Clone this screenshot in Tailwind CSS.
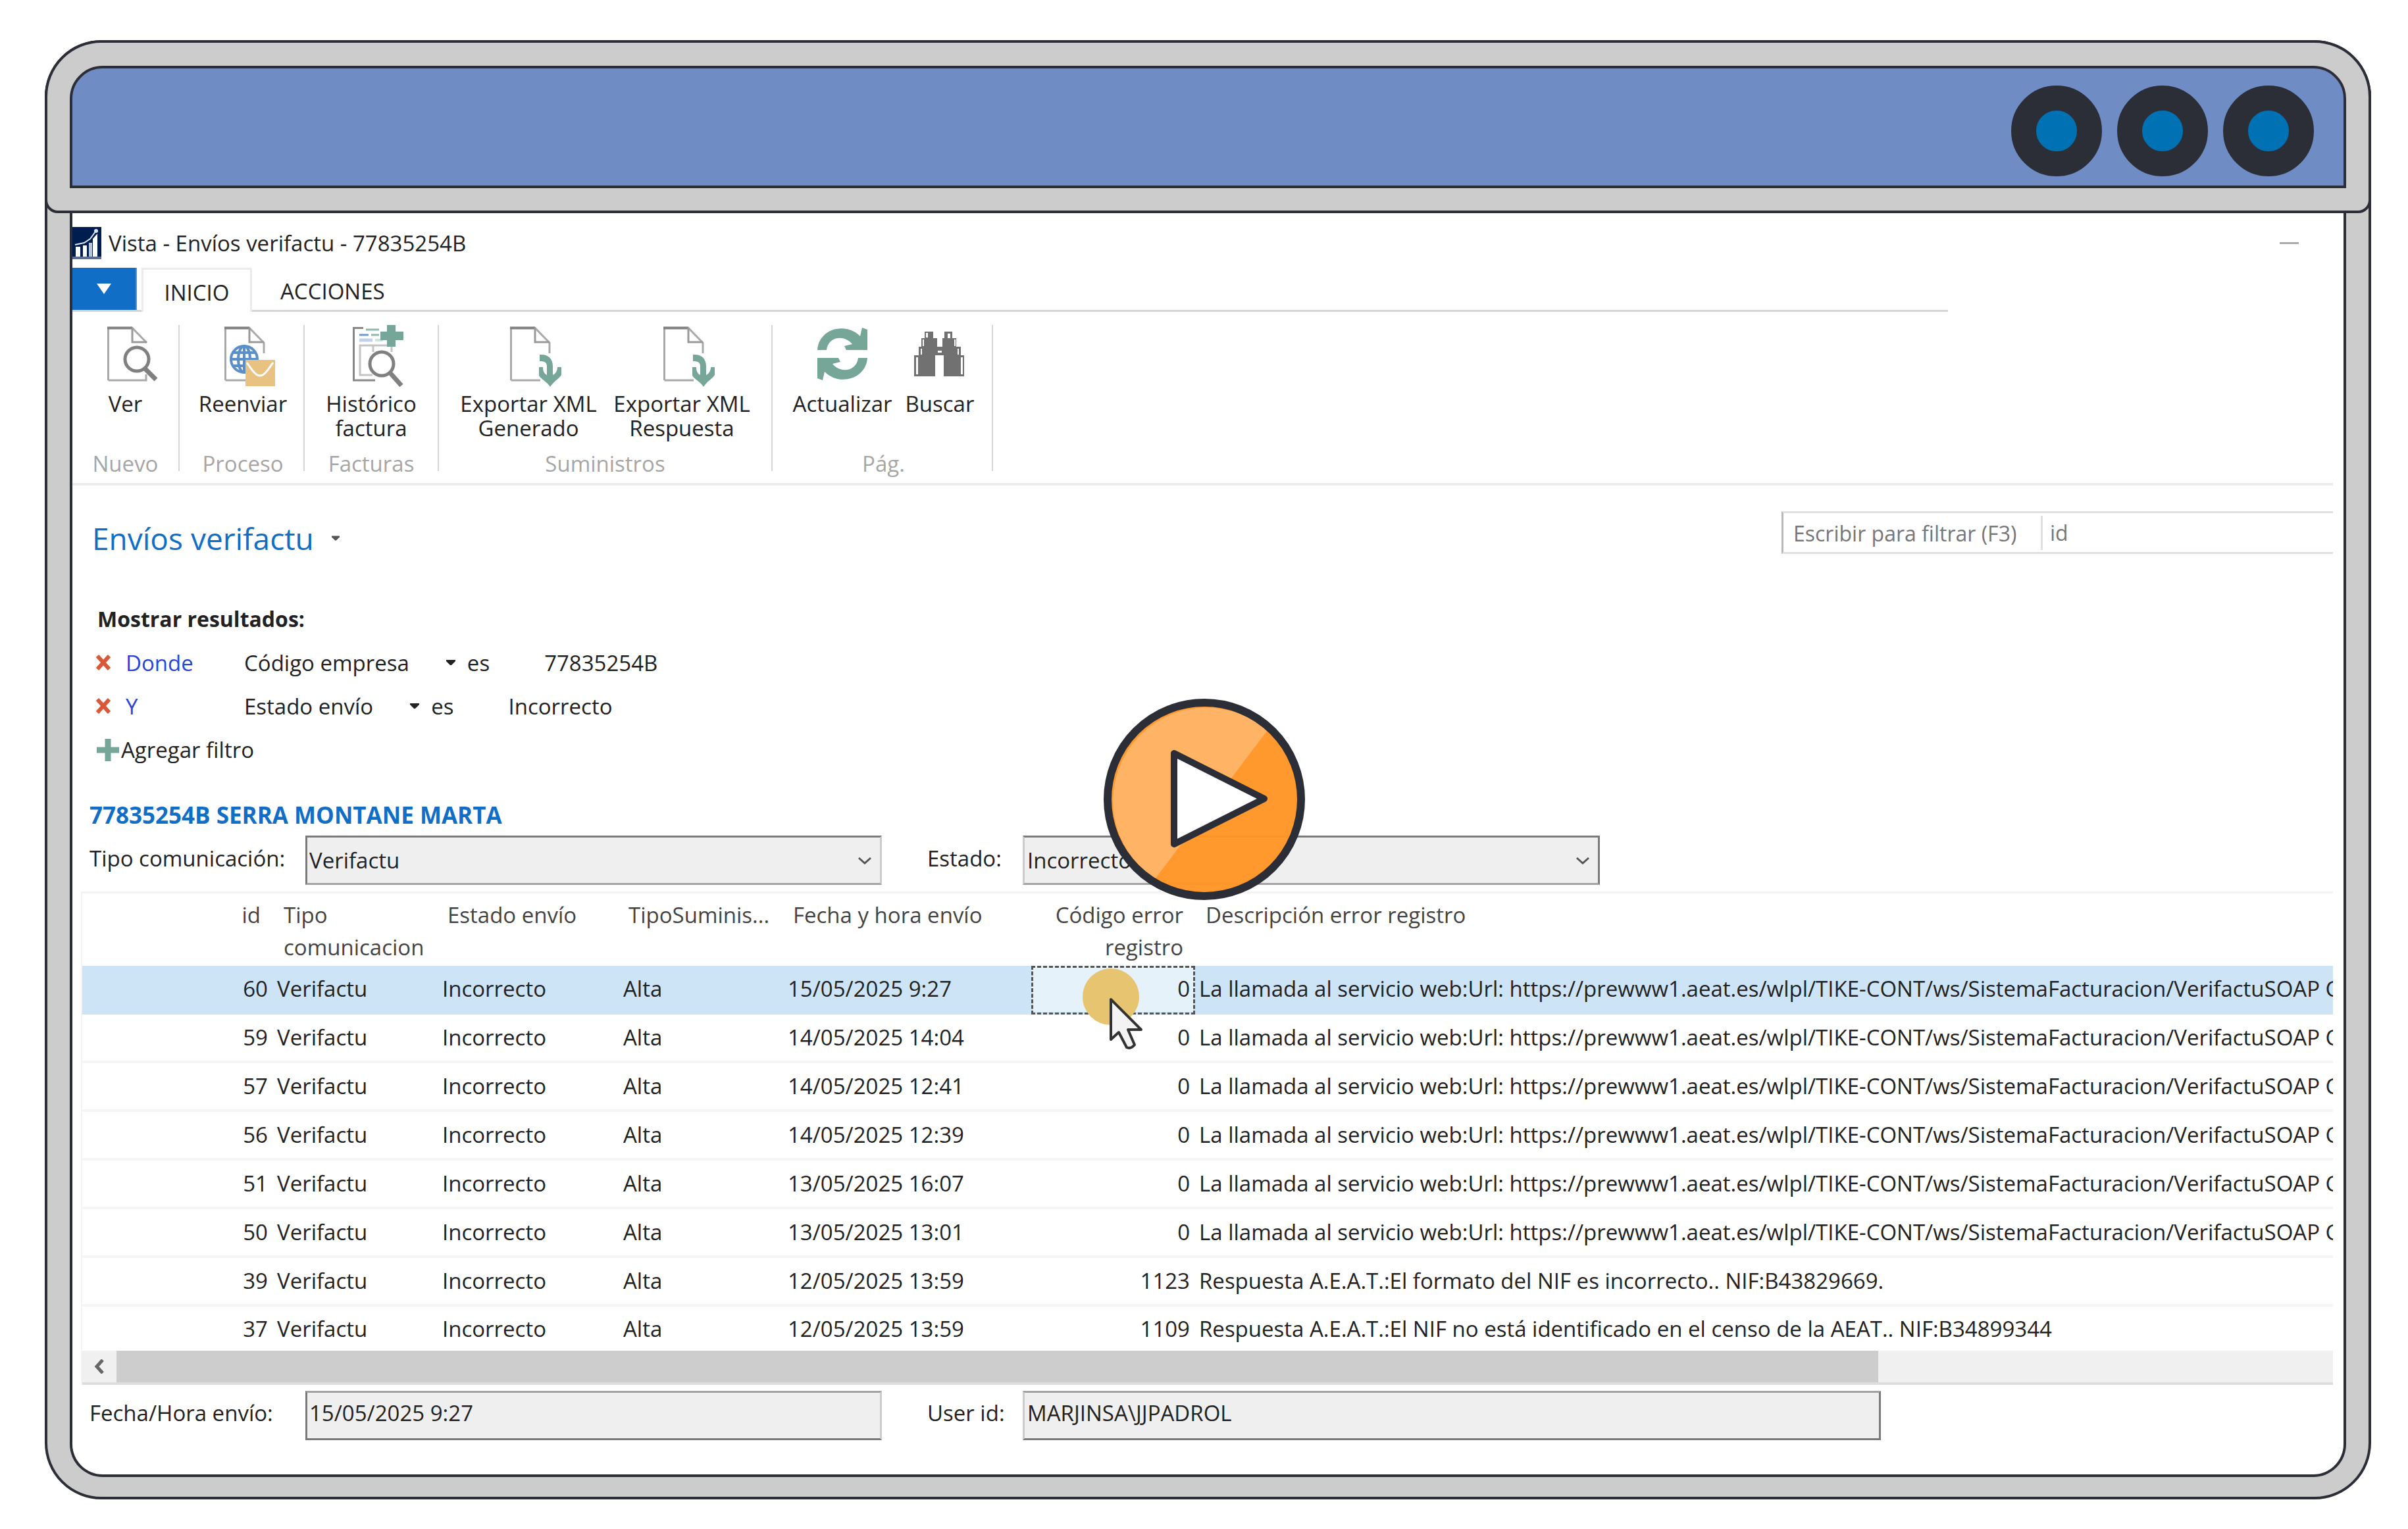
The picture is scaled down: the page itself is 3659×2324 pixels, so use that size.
<!DOCTYPE html>
<html lang="es">
<head>
    <meta charset="UTF-8">
    <meta name="viewport" content="width=device-width, initial-scale=1.0">
    <title>Vista - Envíos verifactu - 77835254B</title>
    <script src="https://cdn.jsdelivr.net/npm/@tailwindcss/browser@4"></script>
</head>
<body class="bg-white font-['Open_Sans',sans-serif] text-[33px] leading-[37px] text-[#222]">

<!-- Shared icon shapes -->
<svg class="hidden">
    <symbol id="doc" viewBox="-24 -3 104 94">
        <path d="M1.5 81V1.5H38L60 24v16M1.5 81H59V64" fill="none" stroke="#a9a9a9" stroke-width="3"/>
        <path d="M0 1.5H38" stroke="#808080" stroke-width="4"/>
        <path d="M38 1V23H60" fill="none" stroke="#999" stroke-width="3"/>
    </symbol>
    <symbol id="xml" viewBox="-24 -3 104 94">
        <path d="M1.5 81V1.5H38L60 24v16M1.5 81H46" fill="none" stroke="#a9a9a9" stroke-width="3"/>
        <path d="M0 1.5H38" stroke="#808080" stroke-width="4"/>
        <path d="M38 1V23H60" fill="none" stroke="#999" stroke-width="3"/>
        <path d="M45 42C58 41 65 48 65 60V73C69 71 72 67 72 61H78V73C74 79 66 83 61 91C56 83 48 80 44 74V61H50C50 67 52 71 56 73V60C56 54 53 52 45 52Z" fill="#76a697"/>
    </symbol>
    <symbol id="cross" viewBox="0 0 24 24">
        <path d="M3 2l18 20M21 2L3 22" stroke="#d9583a" stroke-width="6"/>
    </symbol>
    <symbol id="caret" viewBox="0 0 14 8">
        <path d="M0 0h14v2L8 8H6L0 2z" fill="currentColor"/>
    </symbol>
    <symbol id="chevron" viewBox="0 0 22 12">
        <path d="M2 2l9 8 9-8" fill="none" stroke="#555" stroke-width="3"/>
    </symbol>
</svg>

<main class="flex min-h-screen flex-col pt-[61px] pr-[56px] pb-[45px] pl-[68px]">
    <div class="flex flex-1 flex-col rounded-[86px] border-4 border-[#2c2e37] bg-[#ccc] pb-[30px]">

        <!-- Window bar -->
        <header class="-mx-1 -mt-1 rounded-t-[86px] rounded-b-[20px] border-4 border-[#2c2e37] bg-[#ccc] px-[34px] pt-[35px] pb-[34px]">
            <div class="flex h-[186px] justify-end gap-[23px] rounded-t-[50px] border-4 border-[#2c2e37] bg-[#6f8dc4] pt-[26px] pr-[45px]">
                <span class="size-[138px] rounded-full border-[38px] border-[#2c2e37] bg-[#0072b4]"></span>
                <span class="size-[138px] rounded-full border-[38px] border-[#2c2e37] bg-[#0072b4]"></span>
                <span class="size-[138px] rounded-full border-[38px] border-[#2c2e37] bg-[#0072b4]"></span>
            </div>
        </header>

        <section class="relative mx-[34px] flex-1 rounded-b-[50px] border-x-4 border-b-4 border-[#2c2e37] bg-white pt-[21px] pb-[51px]">

            <!-- Title -->
            <div class="flex h-[49px] items-center pr-[68px]">
                <svg class="h-[49px] w-[44px]" viewBox="0 0 44 49">
                    <path fill="#001d4f" d="M0 0h44v49H0z"/>
                    <path fill="#5a6f94" d="M0 45h44v4H0z"/>
                    <path fill="#fff" d="M5 30h7v15H5zM16 28h6v17h-6zM31 18l7-8v35h-7z"/>
                    <path fill="#b9c3d8" d="M25 24h5v21h-5z"/>
                    <path d="M4 27l14-3 9-6 8-11" fill="none" stroke="#dfe5f0" stroke-width="2"/>
                    <circle cx="36" cy="6" r="3" fill="#dfe5f0"/>
                </svg>
                <h1 class="pl-[11px]">Vista - Envíos verifactu - 77835254B</h1>
                <button class="ml-auto flex h-[40px] w-[29px] items-center" aria-label="Minimizar"><span class="h-[3px] w-full bg-[#aaa]"></span></button>
            </div>

            <!-- Ribbon tabs -->
            <nav class="mt-[13px] mr-[601px] flex h-[67px] border-b-[3px] border-[#d4d4d4]">
                <button class="flex h-[64px] w-[98px] items-center justify-center border-r-2 border-[#4a92d6] bg-[#106ec6]" aria-label="Archivo">
                    <svg class="h-[16px] w-[22px]" viewBox="0 0 22 16"><path d="M0 0h22L11 16z" fill="#fff"/></svg>
                </button>
                <button class="ml-[7px] h-[67px] w-[168px] border-x-[3px] border-t-[3px] border-[#ebebeb] bg-white pt-[4px]">INICIO</button>
                <button class="pt-[7px] pl-[43px]">ACCIONES</button>
            </nav>

            <!-- Ribbon -->
            <div class="mr-[16px] flex border-b-4 border-[#ebebeb] pt-[20px] pb-[18px] text-center">
                <div class="flex h-[222px] w-[163px] flex-col border-r-2 border-[#d6d6d6]">
                    <div class="flex flex-1 justify-center">
                        <button class="flex flex-col items-center">
                            <svg class="mb-[7px] h-[94px] w-[104px]" viewBox="-24 -3 104 94">
                                <path d="M1.5 81V1.5H38L60 24M1.5 81H59V72" fill="none" stroke="#a9a9a9" stroke-width="3"/>
                                <path d="M0 1.5H38" stroke="#808080" stroke-width="4"/>
                                <path d="M38 1V23H60" fill="none" stroke="#999" stroke-width="3"/>
                                <circle cx="45" cy="49" r="18" fill="#fff" stroke="#808080" stroke-width="5"/>
                                <path d="M57 63L74 80" stroke="#808080" stroke-width="7"/>
                            </svg>
                            Ver
                        </button>
                    </div>
                    <p class="leading-[22px] text-[#a6a6a6]">Nuevo</p>
                </div>
                <div class="flex h-[222px] w-[190px] flex-col border-r-2 border-[#d6d6d6] pl-[4px]">
                    <div class="flex flex-1 justify-center">
                        <button class="flex flex-col items-center">
                            <svg class="mb-[7px] h-[94px] w-[104px]" viewBox="-24 -3 104 94">
                                <use href="#doc" x="-24" y="-3" width="104" height="94"/>
                                <circle cx="30" cy="49" r="23" fill="#fff"/>
                                <g fill="none" stroke="#5b8fc9" stroke-width="4">
                                    <circle cx="30" cy="49" r="20"/>
                                    <ellipse cx="30" cy="49" rx="9" ry="20"/>
                                    <path d="M30 29v40M10 49h40M13 39h34M13 59h34"/>
                                </g>
                                <path fill="#e9c180" d="M32 50h45v40H32z"/>
                                <path d="M34 54c7 10 13 20 20 20s13-10 20-20" fill="none" stroke="#fff" stroke-width="3"/>
                            </svg>
                            Reenviar
                        </button>
                    </div>
                    <p class="leading-[22px] text-[#a6a6a6]">Proceso</p>
                </div>
                <div class="flex h-[222px] w-[204px] flex-col border-r-2 border-[#d6d6d6]">
                    <div class="flex flex-1 justify-center">
                        <button class="flex flex-col items-center">
                            <svg class="mb-[7px] h-[94px] w-[104px]" viewBox="-24 -3 104 94">
                                <path d="M16 1.5H1.5V81H34" fill="none" stroke="#888" stroke-width="3"/>
                                <path d="M20 4h20M28 12h12" stroke="#8fb9ab" stroke-width="3"/>
                                <path d="M10 12h14" stroke="#6f9bd0" stroke-width="3"/>
                                <path d="M10 20h20" stroke="#c0d2ea" stroke-width="5"/>
                                <path d="M34 20h12" stroke="#cfe2db" stroke-width="4"/>
                                <path d="M30 73H11V28h48v10M31 28v10" fill="none" stroke="#c4c4c4" stroke-width="3"/>
                                <path fill="#76a697" d="M52-3h13v10h12v13H65v10H52V20H42V7h10z"/>
                                <circle cx="44" cy="56" r="18" fill="#fff" stroke="#808080" stroke-width="5"/>
                                <path d="M57 70L74 89" stroke="#808080" stroke-width="7"/>
                            </svg>
                            Histórico<br>factura
                        </button>
                    </div>
                    <p class="leading-[22px] text-[#a6a6a6]">Facturas</p>
                </div>
                <div class="flex h-[222px] w-[507px] flex-col border-r-2 border-[#d6d6d6]">
                    <div class="flex flex-1 justify-center">
                        <button class="flex w-[233px] flex-col items-center">
                            <svg class="mb-[7px] h-[94px] w-[104px]"><use href="#xml"/></svg>
                            Exportar XML<br>Generado
                        </button>
                        <button class="flex w-[233px] flex-col items-center">
                            <svg class="mb-[7px] h-[94px] w-[104px]"><use href="#xml"/></svg>
                            Exportar XML<br>Respuesta
                        </button>
                    </div>
                    <p class="leading-[22px] text-[#a6a6a6]">Suministros</p>
                </div>
                <div class="flex h-[222px] w-[335px] flex-col border-r-2 border-[#d6d6d6] pl-[4px]">
                    <div class="flex flex-1 justify-center gap-[20px]">
                        <button class="flex flex-col items-center">
                            <svg class="mb-[7px] h-[94px] w-[80px]" viewBox="0 -7 80 94" fill="#76a697">
                                <path id="arc" d="M2 31C4-2 46-12 67 10L70-3L78 0V31H46L43 25L55 22C44 8 19 9 16 31Z"/>
                                <use href="#arc" transform="rotate(180 40 37)"/>
                            </svg>
                            Actualizar
                        </button>
                        <button class="flex flex-col items-center">
                            <svg class="mb-[7px] h-[94px] w-[78px]" viewBox="0 -10 78 94">
                                <path fill="#717171" d="M16 0h13v10h6v13h8V10h3V0h12v10h6v13h7v13h5v32H45V36H32v32H0V36h7V23h4V10h5z"/>
                                <path fill="#fff" d="M18 2h3v7h-3zM51 3h4v7h-4zM10 26h2v9h-2zM66 26h2v9h-2zM3 39h3v26H3zM71 39h3v26h-3zM36 29h6v3h-6zM13 12h2v10h-2zM61 12h2v10h-2z"/>
                            </svg>
                            Buscar
                        </button>
                    </div>
                    <p class="leading-[22px] text-[#a6a6a6]">Pág.</p>
                </div>
            </div>

            <!-- Page heading and quick filter -->
            <div class="mt-[39px] flex h-[65px] items-end justify-between pr-[16px] pl-[30px]">
                <h2 class="flex items-center gap-[27px] text-[46px] leading-[48px] text-[#106ec6]">
                    Envíos verifactu
                    <svg class="h-[8px] w-[12px] text-[#555]"><use href="#caret"/></svg>
                </h2>
                <form class="flex h-[65px] w-[838px] items-center border-y-[3px] border-l-[3px] border-y-[#e0e0e0] border-l-[#b8b8b8]">
                    <input class="h-full w-[391px] pt-[2px] pl-[15px] text-[32px] placeholder:text-[#777]" type="text" placeholder="Escribir para filtrar (F3)" aria-label="Escribir para filtrar">
                    <select class="h-[52px] flex-1 appearance-none border-l-[3px] border-[#e0e0e0] pl-[11px] text-[32px] text-[#777]" aria-label="Campo"><option>id</option></select>
                </form>
            </div>

            <!-- Filters -->
            <div class="mt-[65px] pl-[35px] leading-[67px]">
                <h3 class="pl-[3px] text-[32px] font-bold">Mostrar resultados:</h3>
                <div class="flex h-[66px] items-center">
                    <button aria-label="Quitar filtro"><svg class="size-[24px]"><use href="#cross"/></svg></button>
                    <a class="w-[202px] pl-[22px] text-[#2b44d8]" href="#">Donde</a>
                    <span>Código empresa</span>
                    <button class="mr-[18px] ml-[56px]" aria-label="Elegir campo"><svg class="h-[8px] w-[14px]"><use href="#caret"/></svg></button>
                    <span>es</span>
                    <span class="pl-[83px]">77835254B</span>
                </div>
                <div class="flex h-[66px] items-center">
                    <button aria-label="Quitar filtro"><svg class="size-[24px]"><use href="#cross"/></svg></button>
                    <a class="w-[202px] pl-[22px] text-[#2b44d8]" href="#">Y</a>
                    <span>Estado envío</span>
                    <button class="mr-[18px] ml-[56px]" aria-label="Elegir campo"><svg class="h-[8px] w-[14px]"><use href="#caret"/></svg></button>
                    <span>es</span>
                    <span class="pl-[83px]">Incorrecto</span>
                </div>
                <button class="flex items-center gap-[3px] pl-[2px]">
                    <svg class="size-[34px]" viewBox="0 0 34 34"><path d="M17 0v34M0 17h34" stroke="#76a697" stroke-width="9"/></svg>
                    Agregar filtro
                </button>
            </div>

            <h3 class="mt-[35px] pl-[26px] text-[35px] leading-[62px] font-bold text-[#106ec6]">77835254B SERRA MONTANE MARTA</h3>

            <div class="flex pl-[26px] leading-[70px]">
                <label class="w-[328px]" for="tipo">Tipo comunicación:</label>
                <div class="relative w-[876px]">
                    <select id="tipo" class="h-[75px] w-full appearance-none border-[3px] border-t-[#7a7a7a] border-r-[#ccc] border-b-[#a3a3a3] border-l-[#7a7a7a] bg-[#efefef] pb-[8px] pl-[3px]"><option>Verifactu</option></select>
                    <svg class="pointer-events-none absolute top-[32px] right-[15px] h-[12px] w-[22px]"><use href="#chevron"/></svg>
                </div>
                <label class="w-[214px] pl-[69px]" for="estado">Estado:</label>
                <div class="relative w-[877px]">
                    <select id="estado" class="h-[75px] w-full appearance-none border-[3px] border-t-[#7a7a7a] border-r-[#7a7a7a] border-b-[#a3a3a3] border-l-[#ccc] bg-[#efefef] pb-[8px] pl-[4px]"><option>Incorrecto</option></select>
                    <svg class="pointer-events-none absolute top-[32px] right-[15px] h-[12px] w-[22px]"><use href="#chevron"/></svg>
                </div>
            </div>

            <!-- Results -->
            <div class="mt-[10px] mr-[16px] ml-[13px] border-t-[3px] border-l-2 border-[#f3f3f3]">
                <table class="w-full table-fixed">
                    <colgroup>
                        <col class="w-[290px]"><col class="w-[249px]"><col class="w-[275px]"><col class="w-[250px]"><col class="w-[378px]"><col class="w-[249px]"><col>
                    </colgroup>
                    <thead>
                        <tr class="h-[110px] text-left align-top leading-[49px] text-[#444]">
                            <th class="pt-[8px] pr-[19px] text-right font-normal">id</th>
                            <th class="pt-[8px] pl-[16px] font-normal">Tipo<br>comunicacion</th>
                            <th class="pt-[8px] pl-[16px] font-normal">Estado envío</th>
                            <th class="pt-[8px] pl-[16px] font-normal">TipoSuminis...</th>
                            <th class="pt-[8px] pl-[16px] font-normal">Fecha y hora envío</th>
                            <th class="pt-[8px] pr-[18px] text-right font-normal">Código error<br>registro</th>
                            <th class="pt-[8px] pl-[16px] font-normal">Descripción error registro</th>
                        </tr>
                    </thead>
                    <tbody id="rows"></tbody>
                </table>
                <div class="flex h-[52px] border-b-4 border-[#ddd] bg-[#f0f0f0]">
                    <button class="flex w-[52px] items-center justify-center" aria-label="Desplazar a la izquierda">
                        <svg class="h-[22px] w-[16px]" viewBox="0 0 16 22"><path d="M13 1L4 11l9 10" fill="none" stroke="#666" stroke-width="5"/></svg>
                    </button>
                    <div class="w-[2677px] bg-[#cdcdcd]"></div>
                </div>
            </div>

            <div class="mt-[9px] flex pl-[26px] leading-[68px]">
                <label class="w-[328px]" for="fecha">Fecha/Hora envío:</label>
                <input id="fecha" class="h-[75px] w-[876px] border-[3px] border-t-[#a3a3a3] border-r-[#ccc] border-b-[#7a7a7a] border-l-[#7a7a7a] bg-[#efefef] pb-[9px] pl-[3px]" value="15/05/2025 9:27" readonly>
                <label class="w-[214px] pl-[69px]" for="user">User id:</label>
                <input id="user" class="h-[75px] w-[1304px] border-[3px] border-t-[#a3a3a3] border-r-[#7a7a7a] border-b-[#7a7a7a] border-l-[#ccc] bg-[#efefef] pb-[9px] pl-[4px]" value="MARJINSA\JJPADROL" readonly>
            </div>

            <!-- Play button -->
            <button class="absolute top-[738px] left-[calc(50%-159px)] size-[306px]" aria-label="Reproducir">
                <svg viewBox="0 0 306 306">
                    <circle cx="153" cy="153" r="147" fill="#ff9526" fill-opacity=".97"/>
                    <path d="M249 48A142 142 0 1 0 78 274Z" fill="#ffb466" fill-opacity=".97"/>
                    <circle cx="153" cy="153" r="147" fill="none" stroke="#2c2e37" stroke-width="12"/>
                    <path d="M107 83v138l137-69z" fill="#fff" stroke="#2c2e37" stroke-width="10" stroke-linejoin="round"/>
                </svg>
            </button>
        </section>
    </div>
</main>

<script>
    const soap = 'La llamada al servicio web:Url: https://prewww1.aeat.es/wlpl/TIKE-CONT/ws/SistemaFacturacion/VerifactuSOAP C';
    const data = [
        [60, '15/05/2025 9:27', 0, soap],
        [59, '14/05/2025 14:04', 0, soap],
        [57, '14/05/2025 12:41', 0, soap],
        [56, '14/05/2025 12:39', 0, soap],
        [51, '13/05/2025 16:07', 0, soap],
        [50, '13/05/2025 13:01', 0, soap],
        [39, '12/05/2025 13:59', 1123, 'Respuesta A.E.A.T.:El formato del NIF es incorrecto.. NIF:B43829669.'],
        [37, '12/05/2025 13:59', 1109, 'Respuesta A.E.A.T.:El NIF no está identificado en el censo de la AEAT.. NIF:B34899344'],
    ];

    // Focus rectangle, click highlight and pointer on the selected cell
    const focus = `
        <span class="absolute inset-x-0 top-0 h-[74px] border-[3px] border-dashed border-[#555]"></span>
        <span class="absolute top-[4px] left-[78px] size-[86px] rounded-full bg-[#e6c470]"></span>
        <svg class="absolute top-[48px] left-[118px] z-10 h-[80px] w-[52px]" viewBox="0 0 52 80">
            <path d="M3 3V64L15 53L27 76Q33 79 39 72L29 49H49Z" fill="#f3f3f3" stroke="#333" stroke-width="4" stroke-linejoin="round"/>
        </svg>`;

    document.getElementById('rows').innerHTML = data.map(([id, date, code, desc], i) => {
        const row = i === 0 ? 'bg-[#cde4f7] border-b-4 border-[#cde4f7] leading-[70px]'
            : i === data.length - 1 ? 'leading-[67px]'
            : 'border-b-4 border-[#f5f5f5] leading-[70px]';
        return `<tr class="${row} whitespace-nowrap">
            <td class="pr-[8px] text-right">${id}</td>
            <td class="pl-[6px]">Verifactu</td>
            <td class="pl-[8px]">Incorrecto</td>
            <td class="pl-[8px]">Alta</td>
            <td class="pl-[8px]">${date}</td>
            <td class="${i === 0 ? 'relative bg-[#e5f2fa]' : ''} pr-[8px] text-right">${i === 0 ? focus : ''}<span class="relative">${code}</span></td>
            <td class="overflow-hidden pl-[6px]">${desc}</td>
        </tr>`;
    }).join('');
</script>
</body>
</html>
